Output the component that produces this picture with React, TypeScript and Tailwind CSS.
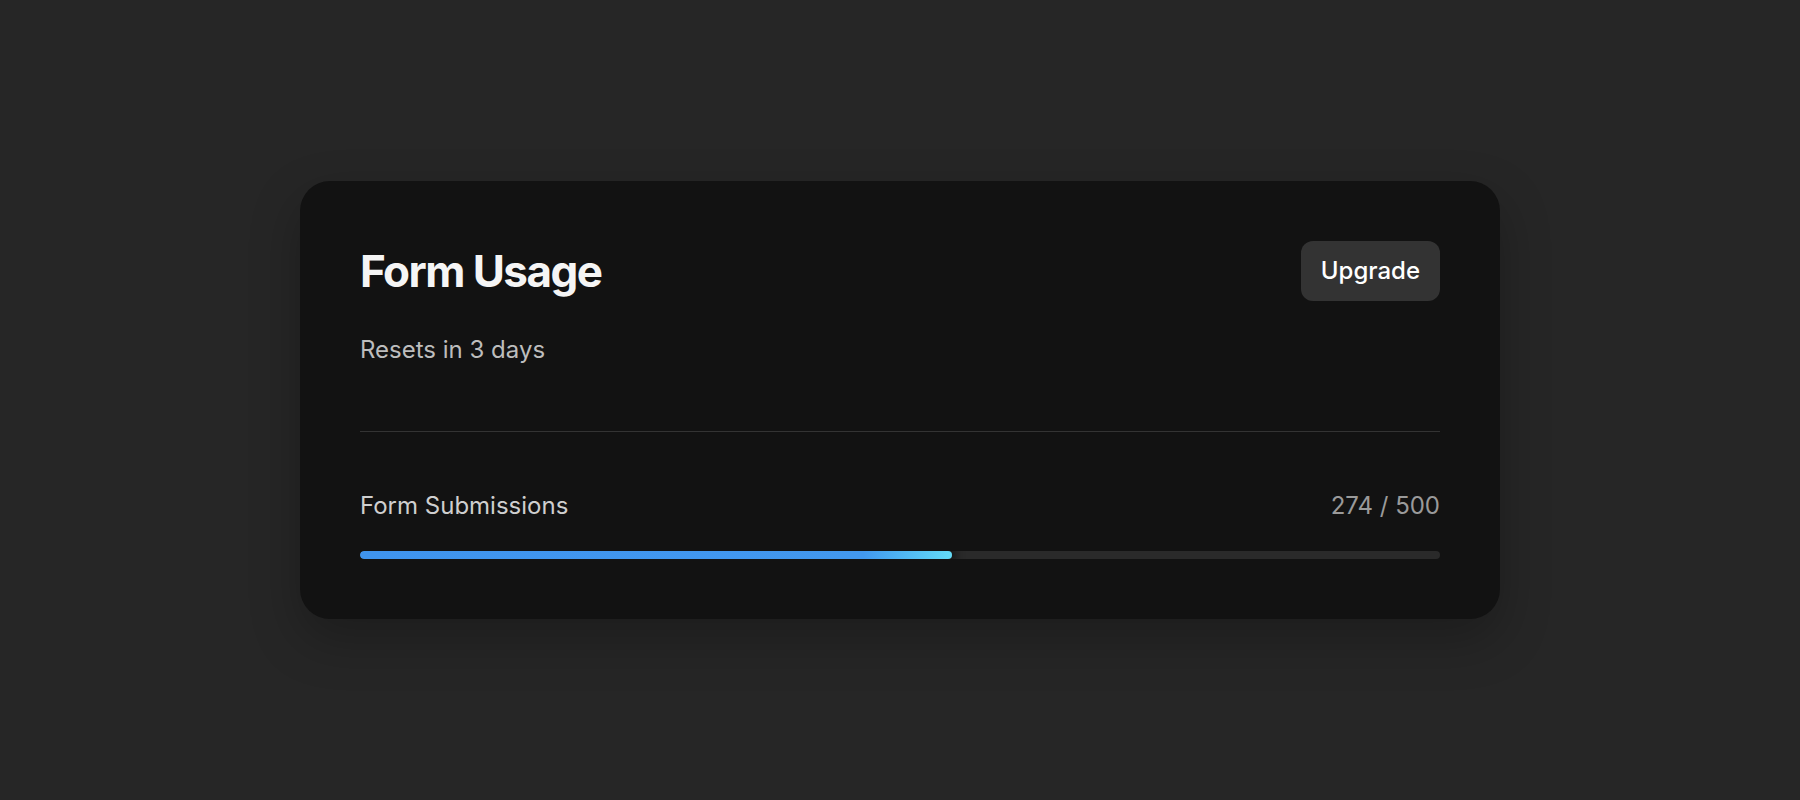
import React from 'react';

const used = 274;
const limit = 500;

export default function App() {
  const pct = (used / limit) * 100;

  return (
    <div
      className="min-h-screen w-full bg-[#262626] flex items-center justify-center"
      style={{ fontFamily: 'Inter, "Noto Sans", sans-serif' }}
    >
      <div className="w-[1200px] rounded-[30px] bg-[#121212] p-[60px] shadow-[0_20px_50px_rgba(0,0,0,0.25)]">
        <div className="flex items-center justify-between h-[60px]">
          <h1 className="text-[44px] font-bold tracking-[-0.035em] text-[#f5f5f5] leading-none">
            Form Usage
          </h1>
          <button className="h-[60px] px-5 rounded-xl bg-[#333333] text-white text-[24px] font-medium">
            Upgrade
          </button>
        </div>

        <p className="mt-[33px] text-[24px] leading-8 text-[#bdbdbd]">Resets in 3 days</p>

        <div className="mt-[65px] h-px bg-[#333333]" />

        <div className="mt-[58px] flex items-center justify-between text-[24px] leading-8">
          <span className="text-[#cfcfcf]">Form Submissions</span>
          <span className="text-[#9a9a9a]">
            {used} / {limit}
          </span>
        </div>

        <div className="mt-[29px] h-2 w-full rounded-full bg-[#2a2a2a] overflow-hidden">
          <div
            className="h-full rounded-full bg-linear-to-r from-[#3f94ee] via-[#4298ef] via-85% to-[#64dcf7] shadow-[4px_0_10px_rgba(0,0,0,0.8)]"
            style={{ width: `${pct}%` }}
          />
        </div>
      </div>
    </div>
  );
}
